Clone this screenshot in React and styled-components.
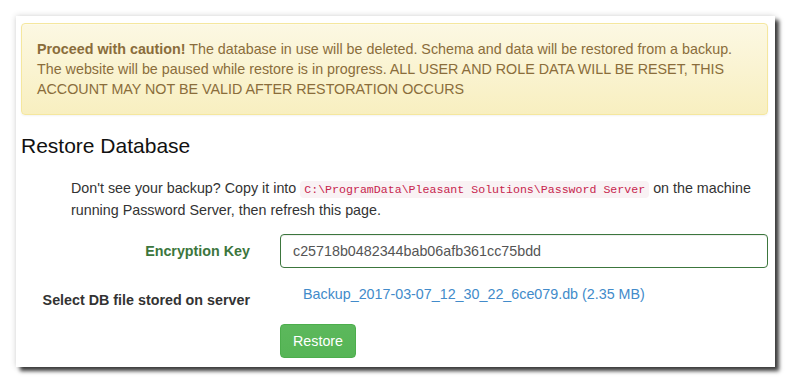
import styled, { createGlobalStyle } from 'styled-components';

const GlobalStyle = createGlobalStyle`
  html, body {
    margin: 0;
    padding: 0;
    background: #ffffff;
  }
  body {
    font-family: "Liberation Sans", Arial, sans-serif;
    font-size: 14.3px;
    line-height: 20px;
    color: #333333;
  }
`;

const Page = styled.div`
  width: 792px;
  height: 384px;
  padding: 16px 17px 0 16px;
  box-sizing: border-box;
`;

const Panel = styled.div`
  height: 351px;
  box-sizing: border-box;
  background: #ffffff;
  padding: 7px 7px 0 5px;
  box-shadow: 4px 4px 4px rgba(0, 0, 0, 0.75), 0 0 6px rgba(0, 0, 0, 0.18);
`;

const Alert = styled.div`
  padding: 15px;
  border: 1px solid #f5e79e;
  border-radius: 4px;
  color: #8a6d3b;
  background: linear-gradient(to bottom, #fcf8e3 0%, #f8efc0 100%);
  box-shadow: inset 0 1px 0 rgba(255, 255, 255, 0.25), 0 1px 2px rgba(0, 0, 0, 0.05);
  white-space: nowrap;
`;

const Heading = styled.h3`
  margin: 20px 0 0;
  font-size: 21px;
  font-weight: normal;
  line-height: 22px;
  color: #111111;
`;

const Hint = styled.p`
  margin: 21px 0 0;
  padding-left: 50px;
  color: #333333;
`;

const Code = styled.code`
  font-family: "Liberation Mono", "DejaVu Sans Mono", monospace;
  font-size: 11.6px;
  padding: 2px 4px;
  color: #c7254e;
  background: #f9f2f4;
  border-radius: 4px;
`;

const Form = styled.div`
  margin-top: 14px;
  display: grid;
  grid-template-columns: 244px 1fr;
  column-gap: 15px;
`;

const Label = styled.label`
  padding: ${(p) => (p.$pad ? p.$pad : '7px')} 15px 0 0;
  text-align: right;
  font-weight: bold;
  white-space: nowrap;
  color: ${(p) => (p.$success ? '#3c763d' : '#333333')};
`;

const Input = styled.input`
  height: 34px;
  box-sizing: border-box;
  width: 100%;
  padding: 6px 12px;
  font-family: "Liberation Sans", Arial, sans-serif;
  font-size: 14.3px;
  color: #555555;
  border: 1px solid #3c763d;
  border-radius: 4px;
  outline: none;
  box-shadow: inset 0 1px 1px rgba(0, 0, 0, 0.075);
`;

const Row = styled.div`
  display: contents;
`;

const Static = styled.div`
  padding: 1px 0 0 23px;
  min-height: 34px;
  box-sizing: border-box;
  margin-top: 15px;
`;

const FileLink = styled.a`
  color: #428bca;
  text-decoration: none;
`;

const Spaced = styled.div`
  margin-top: ${(p) => p.$top || '0'};
`;

const Button = styled.button`
  height: 34px;
  padding: 6px 12px;
  font-family: "Liberation Sans", Arial, sans-serif;
  font-size: 14.3px;
  line-height: 20px;
  color: #ffffff;
  background: linear-gradient(to bottom, #5cb85c 0%, #56b556 100%);
  border: 1px solid #4cae4c;
  border-radius: 4px;
  cursor: pointer;
`;

const App = () => {
  return (
    <>
      <GlobalStyle />
      <Page>
        <Panel>
          <Alert>
            <strong>Proceed with caution!</strong> The database in use will be deleted. Schema and data will be
            restored from a backup.
            <br />
            The website will be paused while restore is in progress. ALL USER AND ROLE DATA WILL BE RESET, THIS
            <br />
            ACCOUNT MAY NOT BE VALID AFTER RESTORATION OCCURS
          </Alert>
          <Heading>Restore Database</Heading>
          <Hint>
            Don't see your backup? Copy it into <Code>C:\ProgramData\Pleasant Solutions\Password Server</Code> on
            the machine running Password Server, then refresh this page.
          </Hint>
          <Form>
            <Row>
              <Label $success>Encryption Key</Label>
              <Input defaultValue="c25718b0482344bab06afb361cc75bdd" />
            </Row>
            <Row>
              <Spaced $top="15px">
                <Label $pad="7px" as="div">Select DB file stored on server</Label>
              </Spaced>
              <Static>
                <FileLink href="#">Backup_2017-03-07_12_30_22_6ce079.db (2.35 MB)</FileLink>
              </Static>
            </Row>
            <Row>
              <div />
              <Spaced $top="7px">
                <Button>Restore</Button>
              </Spaced>
            </Row>
          </Form>
        </Panel>
      </Page>
    </>
  );
};

export default App;
